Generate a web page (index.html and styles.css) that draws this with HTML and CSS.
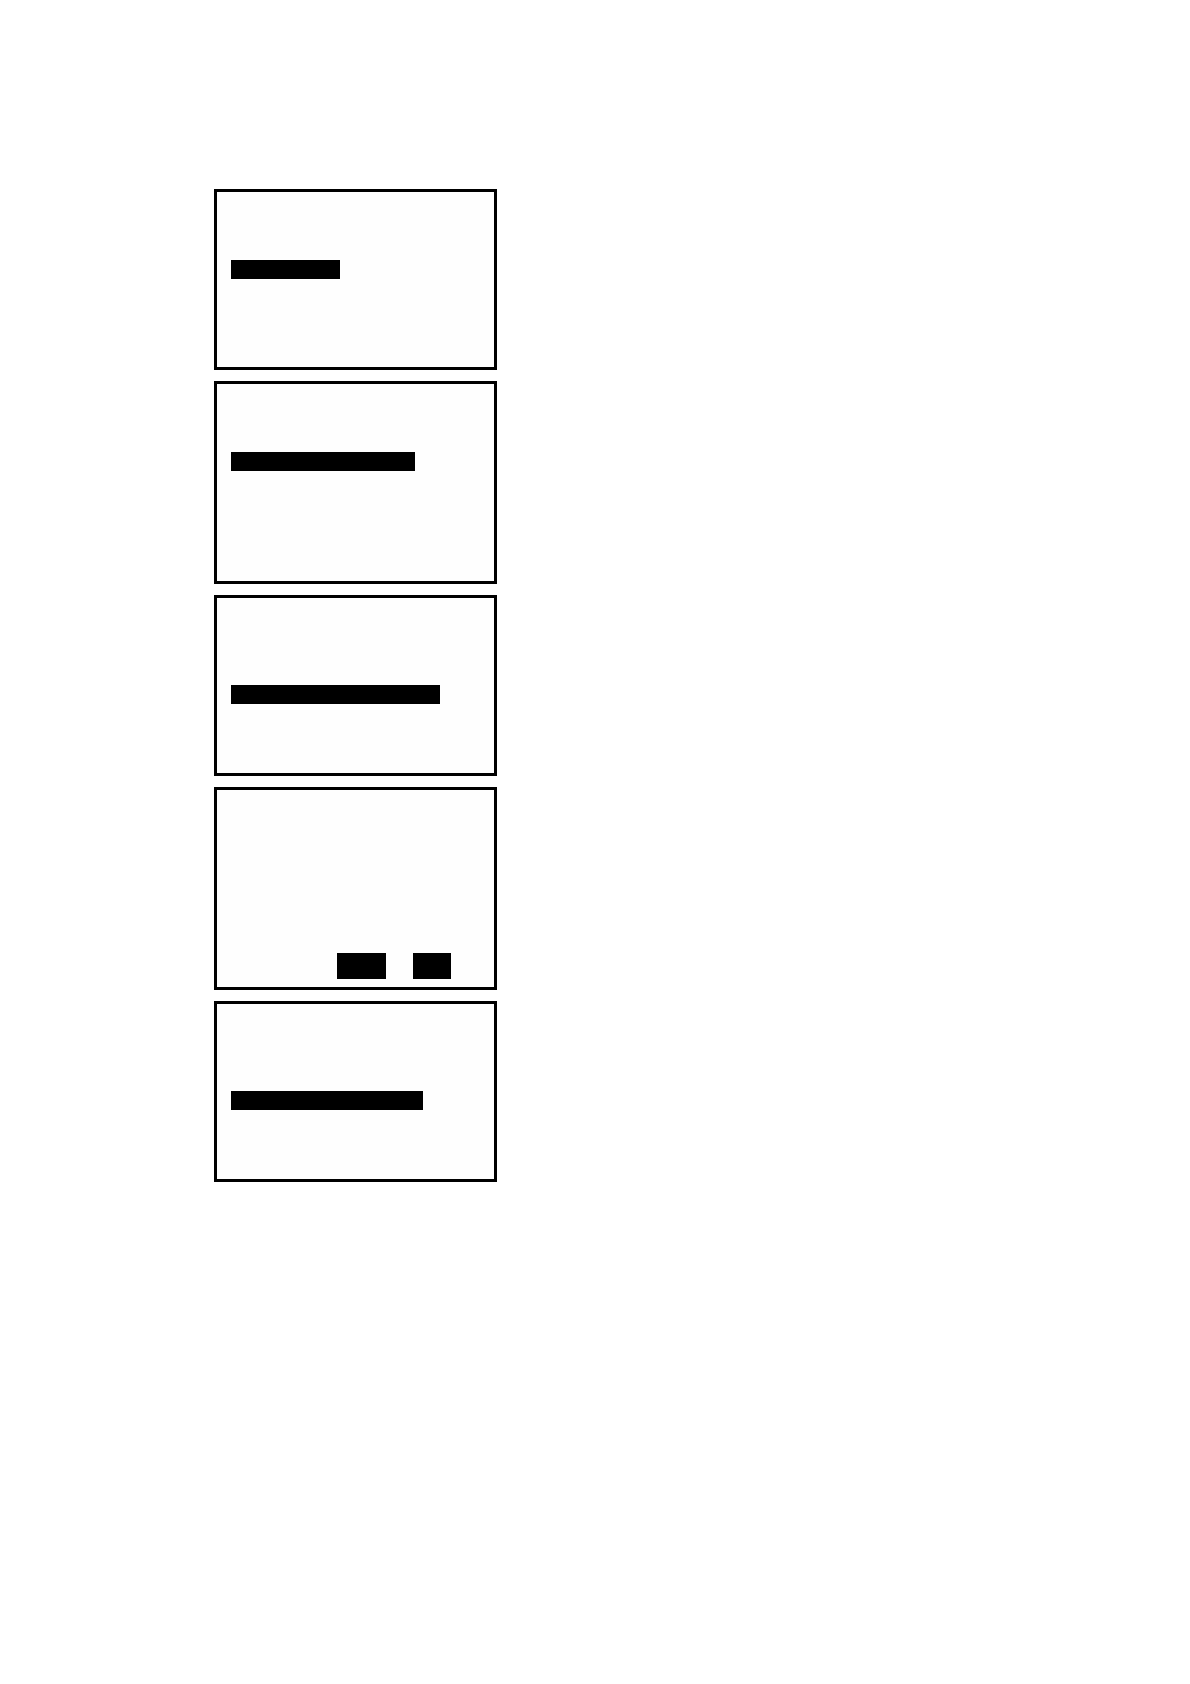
FILE: index.html
```html
<!DOCTYPE html>
<html lang="en">
  <head>
    <meta charset="UTF-8" />
    <meta name="viewport" content="width=device-width, initial-scale=1.0" />
    <title>Menu screens</title>
    <link rel="stylesheet" href="styles.css">
  </head>
  <body>
    <main class="screens">
      <section class="screen">
        <div class="bar row-4" style="width: 109px"></div>
      </section>
      <section class="screen tall">
        <div class="bar row-4" style="width: 184px"></div>
      </section>
      <section class="screen">
        <div class="bar row-5" style="width: 209px"></div>
      </section>
      <section class="screen tall dialog">
        <div class="block" style="width: 49px"></div>
        <div class="block" style="width: 38px"></div>
      </section>
      <section class="screen">
        <div class="bar row-5" style="width: 192px"></div>
      </section>
    </main>
  </body>
</html>
```

FILE: styles.css
```css
body {
  margin: 0;
  background: #ffffff;
  font-family: "Liberation Sans", sans-serif;
}

.screens {
  display: flex;
  flex-direction: column;
  gap: 11px;
  max-width: 283px;
  margin-left: 18%;
  padding: 189px 0;
}

/* one display, laid out in 19px text rows */
.screen {
  display: grid;
  grid-template-rows: repeat(8, 19px);
  box-sizing: border-box;
  min-height: 181px;
  padding: 11px 14px;
  border: 3px solid #000000;
  background: #fefefe;
}

.tall {
  min-height: 203px;
}

.bar,
.block {
  background: #000000;
}

.bar {
  max-width: 100%;
}

.row-4 {
  grid-row: 4;
}

.row-5 {
  grid-row: 5;
}

.dialog {
  display: flex;
  justify-content: flex-end;
  align-items: flex-end;
  gap: 27px;
  padding: 8px 43px;
}

.block {
  height: 26px;
}
```
